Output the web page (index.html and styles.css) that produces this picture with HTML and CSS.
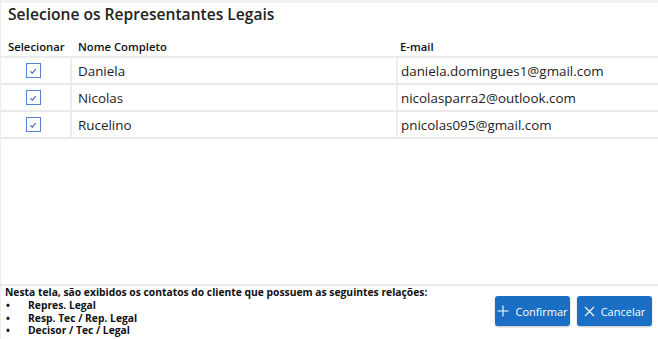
FILE: index.html
```html
<!DOCTYPE html>
<html>
	<head>
		<meta charset="UTF-8">
		<title>Representantes Legais</title>
		<link rel="stylesheet" href="styles.css">
	</head>
	<body>
		<div class="dialog">
			<div class="topbar"></div>
			<h1 class="title">Selecione os Representantes Legais</h1>
			<div class="grid">
				<div class="row head">
					<div class="cell sel">Selecionar</div>
					<div class="cell">Nome Completo</div>
					<div class="cell mail">E-mail</div>
				</div>
				<div class="row">
					<div class="cell chk"><span class="box"><svg viewBox="0 0 10 10" width="10" height="10"><path d="M2.4 5.3 L4.3 7.1 L7.8 3.1" fill="none" stroke="#3a63c4" stroke-width="1.1"/></svg></span></div>
					<div class="cell">Daniela</div>
					<div class="cell mail">daniela.domingues1@gmail.com</div>
				</div>
				<div class="row">
					<div class="cell chk"><span class="box"><svg viewBox="0 0 10 10" width="10" height="10"><path d="M2.4 5.3 L4.3 7.1 L7.8 3.1" fill="none" stroke="#3a63c4" stroke-width="1.1"/></svg></span></div>
					<div class="cell">Nicolas</div>
					<div class="cell mail">nicolasparra2@outlook.com</div>
				</div>
				<div class="row">
					<div class="cell chk"><span class="box"><svg viewBox="0 0 10 10" width="10" height="10"><path d="M2.4 5.3 L4.3 7.1 L7.8 3.1" fill="none" stroke="#3a63c4" stroke-width="1.1"/></svg></span></div>
					<div class="cell">Rucelino</div>
					<div class="cell mail">pnicolas095@gmail.com</div>
				</div>
			</div>
			<div class="footer">
				<div class="note">
					<p>Nesta tela, são exibidos os contatos do cliente que possuem as seguintes relações:</p>
					<ul>
						<li>Repres. Legal</li>
						<li>Resp. Tec / Rep. Legal</li>
						<li>Decisor / Tec / Legal</li>
					</ul>
				</div>
				<div class="actions">
					<button class="btn"><svg viewBox="0 0 12 12" width="12" height="12"><path d="M6 0.5 V11.5 M0.5 6 H11.5" stroke="#fff" stroke-width="1.1" fill="none"/></svg>Confirmar</button>
					<button class="btn"><svg viewBox="0 0 11 11" width="11" height="11"><path d="M1 1 L10 10 M10 1 L1 10" stroke="#fff" stroke-width="1.1" fill="none"/></svg>Cancelar</button>
				</div>
			</div>
		</div>
	</body>
</html>
```
FILE: styles.css
```css
html, body{
	margin: 0;
	padding: 0;
	background: #fff;
}
body{
	font-family: "Open Sans", "Noto Sans", sans-serif;
	color: #222;
}
.dialog{
	height: 339px;
	display: flex;
	flex-direction: column;
	border-left: 1px solid #ececec;
	box-sizing: border-box;
}
.topbar{
	height: 3px;
	background: #f2f2f2;
}
.title{
	margin: 0;
	padding: 1px 0 0 7px;
	font-size: 15.6px;
	font-weight: 600;
	line-height: 20px;
	color: #222;
}
.grid{
	margin-top: 13px;
}
.row{
	display: grid;
	grid-template-columns: 69px 326px 1fr;
	height: 25px;
	border-bottom: 2px solid #e9e9e9;
}
.row.head{
	height: 19px;
	border-bottom: 2px solid #ececec;
}
.cell{
	display: flex;
	align-items: center;
	font-size: 13.4px;
	padding-left: 6px;
	border-left: 2px solid #eeeeee;
	color: #222;
}
.row .cell:first-child{
	border-left: none;
}
.cell.mail{
	padding-left: 3px;
}
.head .cell{
	font-size: 11.3px;
	font-weight: 600;
	border-left: none;
	padding-left: 8px;
	color: #111;
}
.head .cell.sel{
	padding-left: 7px;
}
.head .cell.mail{
	padding-left: 4px;
}
.chk{
	justify-content: center;
	padding-left: 0;
	padding-right: 5px;
}
.box{
	width: 13px;
	height: 13px;
	border: 1.5px solid #5a7fd6;
	display: flex;
	align-items: center;
	justify-content: center;
	background: #fff;
}
.footer{
	margin-top: auto;
	border-top: 2px solid #ebebeb;
	display: flex;
	justify-content: space-between;
	align-items: flex-start;
	height: 53px;
}
.note{
	font-size: 10.3px;
	font-weight: 700;
	line-height: 12.8px;
	color: #111;
	padding: 0 0 0 4px;
}
.note p{
	margin: 0;
}
.note ul{
	margin: 0;
	padding: 0;
	list-style: none;
}
.note li{
	position: relative;
	padding-left: 23px;
}
.note li::before{
	content: "\2022";
	position: absolute;
	left: 1px;
}
.actions{
	display: flex;
	gap: 7px;
	padding: 10px 6px 0 0;
}
.btn{
	width: 75px;
	height: 30px;
	border: none;
	border-radius: 3px;
	background: #1a6ec3;
	color: #fff;
	font-family: "Open Sans", "Noto Sans", sans-serif;
	font-size: 11px;
	display: flex;
	align-items: center;
	justify-content: center;
	gap: 6px;
	padding: 0;
	box-shadow: 0 1px 2px rgba(0,0,0,0.25);
}
```
